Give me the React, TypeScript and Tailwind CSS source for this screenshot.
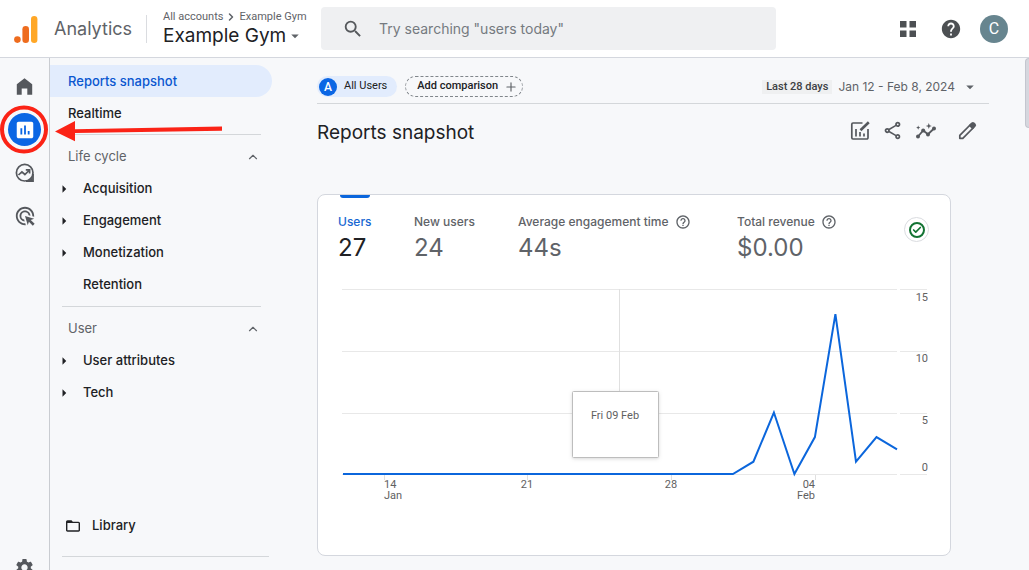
import React from 'react';
import {
  MdAdsClick,
  MdArrowDropDown,
  MdArrowRight,
  MdHelp,
  MdHelpOutline,
  MdInsertChart,
  MdOutlineShare,
  MdSearch,
  MdSettings,
} from 'react-icons/md';
import { Check, ChevronRight, ChevronUp, Plus } from 'lucide-react';

const lifeCycle = [
  { label: 'Acquisition', expandable: true },
  { label: 'Engagement', expandable: true },
  { label: 'Monetization', expandable: true },
  { label: 'Retention', expandable: false },
];

const userItems = [
  { label: 'User attributes', expandable: true },
  { label: 'Tech', expandable: true },
];

const metrics = [
  { label: 'Users', value: '27', active: true, help: false, width: 'w-[76px]' },
  { label: 'New users', value: '24', active: false, help: false, width: 'w-[104px]' },
  { label: 'Average engagement time', value: '44s', active: false, help: true, width: 'w-[219px]' },
  { label: 'Total revenue', value: '$0.00', active: false, help: true, width: 'w-[110px]' },
];

// Users per day, Jan 12 - Feb 8
const dailyUsers = [0, 0, 0, 0, 0, 0, 0, 0, 0, 0, 0, 0, 0, 0, 0, 0, 0, 0, 0, 0, 1, 5, 0, 3, 13, 1, 3, 2];

const CHART_LEFT = 25;
const CHART_RIGHT = 579;
const CHART_BASE = 194;

const points = dailyUsers
  .map((v, i) => {
    const x = CHART_LEFT + (i * (CHART_RIGHT - CHART_LEFT)) / (dailyUsers.length - 1);
    return `${x.toFixed(1)},${(CHART_BASE - v * 12.3).toFixed(1)}`;
  })
  .join(' ');

const gridLines = [
  { y: 9, label: '15', labelY: 21 },
  { y: 71, label: '10', labelY: 82 },
  { y: 133, label: '5', labelY: 144 },
  { y: 194, label: '0', labelY: 191 },
];

const ticks = [
  { x: 66, day: '14', month: 'Jan', anchor: 'start' as const },
  { x: 209, day: '21', month: '', anchor: 'middle' as const },
  { x: 353, day: '28', month: '', anchor: 'middle' as const },
  { x: 497, day: '04', month: 'Feb', anchor: 'end' as const },
];

const LogoIcon = () => (
  <svg viewBox="0 0 24 28" className="w-6 h-7" aria-hidden="true">
    <rect x="17" y="1" width="6.4" height="27" rx="3.2" fill="#ffa726" />
    <rect x="8.4" y="11" width="6.6" height="17" rx="3.3" fill="#ee6c1e" />
    <circle cx="3.4" cy="24.6" r="3.3" fill="#ee6c1e" />
  </svg>
);

const HomeIcon = () => (
  <svg viewBox="0 0 24 24" className="w-[21px] h-[21px]" fill="currentColor" aria-hidden="true">
    <path d="M3.200 21.500V9.400L12 2.600l8.800 6.800v12.100h-5.600v-7.300H8.800v7.300z" />
  </svg>
);

const ExploreIcon = () => (
  <svg viewBox="0 0 20 20" className="w-5 h-5" fill="none" stroke="currentColor" aria-hidden="true">
    <circle cx="9.700" cy="9.700" r="8.300" strokeWidth="1.700" />
    <path d="M11 18h7V11" strokeWidth="1.800" />
    <path d="M17.500 14v3.500H14z" fill="currentColor" stroke="none" />
    <path d="M3.500 12l3.400-3.200 3 2.700L14 7.500M10.800 6.800h3.800v3.800" strokeWidth="1.700" />
  </svg>
);

const ChartEditIcon = () => (
  <svg viewBox="0 0 20 20" className="w-5 h-5" fill="none" stroke="currentColor" aria-hidden="true">
    <path d="M12.500 2H3a1.200 1.200 0 0 0-1.200 1.200v13.600A1.200 1.200 0 0 0 3 18h13.800a1.200 1.200 0 0 0 1.200-1.200V8" strokeWidth="1.700" />
    <path d="M6 8v7.500M10 11v4.500M14 12.500v3" strokeWidth="1.700" />
    <path d="M10.500 9.200L18.800 1.200" strokeWidth="2.600" />
  </svg>
);

const InsightsIcon = () => (
  <svg viewBox="0 0 22 20" className="w-[22px] h-5" fill="currentColor" aria-hidden="true">
    <path d="M3 15.500L8.200 9.500L13 13.200L19 7.500" fill="none" stroke="currentColor" strokeWidth="1.800" />
    <circle cx="3" cy="15.500" r="2" />
    <circle cx="8.200" cy="9.500" r="2" />
    <circle cx="13" cy="13.500" r="2" />
    <circle cx="19" cy="7.500" r="2" />
    <path d="M13.800 2l.8 2.200 2.200.8-2.200.8-.8 2.200-.8-2.200-2.200-.8 2.200-.8zM3.200 4.500l.6 1.500 1.500.6-1.500.6-.6 1.500-.6-1.500-1.500-.6 1.500-.6z" />
  </svg>
);

const PencilIcon = () => (
  <svg viewBox="0 0 20 20" className="w-5 h-5" fill="none" stroke="currentColor" aria-hidden="true">
    <path d="M2.800 17.300v-3L13.600 3.500l3 3L5.800 17.300z" strokeWidth="1.700" strokeLinejoin="round" />
    <path d="M11.600 4.500l2.900-2.900a2 2 0 0 1 2.800 0l1.200 1.200a2 2 0 0 1 0 2.800l-2.900 2.900z" fill="currentColor" stroke="none" />
  </svg>
);

const FolderIcon = () => (
  <svg viewBox="0 0 16 16" className="w-4 h-4" fill="none" stroke="currentColor" aria-hidden="true">
    <path d="M2.500 3h3.700l1.300 1.400h6a.8.8 0 0 1 .8.8v7a.8.8 0 0 1-.8.8h-11a.8.8 0 0 1-.8-.8V3.800A.8.8 0 0 1 2.500 3z" strokeWidth="1.400" />
    <path d="M2 3h4l1.500 2H2z" fill="currentColor" stroke="none" />
  </svg>
);

const Header = () => (
  <header className="flex h-[58px] shrink-0 items-center border-b border-[#d4d7de] bg-white pl-[14px] pr-[21px]">
    <a href="#" className="flex w-[133px] shrink-0 items-center gap-4 border-r border-[#dadce0] text-[18px] text-[#5f6368]">
      <LogoIcon />
      Analytics
    </a>
    <div className="ml-4 w-[158px] shrink-0 whitespace-nowrap">
      <div className="flex items-center text-[11px] leading-[14px] text-[#5f6368] font-['Roboto',sans-serif]">
        <span>All accounts</span>
        <ChevronRight className="mx-0.5 w-3 h-3" strokeWidth={3} />
        <span>Example Gym</span>
      </div>
      <button className="flex items-center text-[19px] leading-6 text-[#202124]">
        Example Gym
        <MdArrowDropDown className="w-[18px] h-[18px] text-[#5f6368]" />
      </button>
    </div>
    <label className="flex h-[43px] max-w-[455px] flex-1 items-center rounded bg-[#eff0f2] pl-[21px]">
      <MdSearch className="w-[22px] h-[22px] text-[#55585c]" />
      <input
        type="text"
        aria-label="Search"
        placeholder={'Try searching "users today"'}
        className="ml-[15px] min-w-0 flex-1 bg-transparent text-[14px] text-[#202124] outline-none placeholder:text-[#757a80]"
      />
    </label>
    <div className="ml-auto flex items-center text-[#4d5053]">
      <button aria-label="Apps" className="mr-6">
        <svg viewBox="0 0 16 16" className="w-4 h-4" fill="currentColor">
          <path d="M0 0h6.500v6.500H0zM9.500 0H16v6.500H9.500zM0 9.500h6.500V16H0zM9.500 9.500H16V16H9.500z" />
        </svg>
      </button>
      <button aria-label="Help" className="mr-[18px]">
        <MdHelp className="w-[22px] h-[22px]" />
      </button>
      <button className="flex w-7 h-7 items-center justify-center rounded-full bg-[#67858f] text-[16px] text-white font-['Roboto',sans-serif]">
        C
      </button>
    </div>
  </header>
);

const Rail = () => (
  <nav aria-label="Main" className="flex w-[50px] shrink-0 flex-col items-center overflow-hidden border-r border-[#c9ccd1] pt-[7px] text-[#55585d]">
    <a href="#" aria-label="Home" className="flex h-[43px] shrink-0 items-center">
      <HomeIcon />
    </a>
    <a href="#" aria-label="Reports" className="flex h-[43px] shrink-0 items-center">
      <span className="flex w-[33px] h-[33px] items-center justify-center rounded-full bg-[#0b66e4] text-white">
        <MdInsertChart className="w-[22px] h-[22px]" />
      </span>
    </a>
    <a href="#" aria-label="Explore" className="flex h-[43px] shrink-0 items-center">
      <ExploreIcon />
    </a>
    <a href="#" aria-label="Advertising" className="flex h-[43px] shrink-0 items-center">
      <MdAdsClick className="w-[22px] h-[22px]" />
    </a>
    <a href="#" aria-label="Admin" className="-mb-2 mt-auto shrink-0">
      <MdSettings className="w-[21px] h-[21px]" />
    </a>
  </nav>
);

const NavGroup = ({ title, items }: { title: string; items: { label: string; expandable: boolean }[] }) => (
  <div className="pt-[5px]">
    <div className="ml-3 mr-[11px] border-t border-[#d4d7da]" />
    <button className="mt-1.5 flex h-8 w-full items-center justify-between pl-[18px] pr-3 font-normal text-[#5f6368]">
      {title}
      <ChevronUp className="w-3.5 h-3.5" />
    </button>
    {items.map((item) => (
      <a key={item.label} href="#" className="flex h-8 items-center pl-[5px]">
        <span className="flex w-7 shrink-0">{item.expandable && <MdArrowRight className="w-[18px] h-[18px]" />}</span>
        {item.label}
      </a>
    ))}
  </div>
);

const Sidebar = () => (
  <nav aria-label="Reports" className="flex w-[222px] shrink-0 flex-col pt-[7px] text-[13px] font-medium text-[#202124]">
    <a href="#" className="flex h-8 items-center rounded-r-full bg-[#e2ecfd] pl-[18px] pt-px text-[#0b57d0]">
      Reports snapshot
    </a>
    <a href="#" className="flex h-8 items-center pl-[18px] pt-px">
      Realtime
    </a>
    <NavGroup title="Life cycle" items={lifeCycle} />
    <NavGroup title="User" items={userItems} />
    <div className="mt-auto pb-[13px]">
      <a href="#" className="flex h-8 items-center gap-[11px] pl-[15px]">
        <FolderIcon />
        Library
      </a>
      <div className="ml-3 mr-[3px] mt-3.5 border-t border-[#d4d7da]" />
    </div>
  </nav>
);

const UsersChart = () => (
  <svg viewBox="0 0 632 234" className="block w-full" role="img" aria-label="Users per day" fontFamily="Roboto, sans-serif" fontSize="11" fill="#616161">
    {gridLines.map((line) => (
      <g key={line.label}>
        <path d={`M24 ${line.y + 0.5}H579M582 ${line.y + 0.5}H609`} stroke="#e8e8e8" />
        <text x="610" y={line.labelY} textAnchor="end">{line.label}</text>
      </g>
    ))}
    {ticks.map((tick) => (
      <g key={tick.day}>
        <path d={`M${tick.x + 0.5} 195v5`} stroke="#e0e0e0" />
        <text x={tick.x} y="208" textAnchor={tick.anchor}>{tick.day}</text>
        <text x={tick.x} y="219" textAnchor={tick.anchor}>{tick.month}</text>
      </g>
    ))}
    <path d="M301.500 9v103" stroke="#e0e0e0" />
    <polyline points={points} fill="none" stroke="#0b66dc" strokeWidth="2" />
    {/* Hover tooltip */}
    <g>
      <rect x="254.500" y="111.500" width="86" height="66" rx="1" fill="#fff" stroke="#bdbdbd" className="drop-shadow" />
      <text x="297" y="139" textAnchor="middle">Fri 09 Feb</text>
    </g>
  </svg>
);

const OverviewCard = () => (
  <section className="mr-[38px] h-[362px] rounded-lg border border-[#d4d7de] bg-white">
    <div className="flex h-[85px] pl-5 pr-[21px]">
      {metrics.map((m) => (
        <button key={m.label} className={`flex shrink-0 flex-col items-start text-left ${m.width}`}>
          <span className={`ml-0.5 h-[3px] w-[30px] rounded-b-sm ${m.active ? 'bg-[#0b66dc]' : ''}`} />
          <span className={`mt-4 flex items-center gap-1.5 whitespace-nowrap text-[12px] font-medium leading-4 ${m.active ? 'text-[#1967d2]' : 'text-[#5f6368]'}`}>
            {m.label}
            {m.help && <MdHelpOutline className="w-4 h-4" />}
          </span>
          <span className={`mt-0.5 text-[24px] leading-8 ${m.active ? 'text-[#202124]' : 'text-[#5f6368]'}`}>{m.value}</span>
        </button>
      ))}
      <button aria-label="Data quality" className="ml-auto mt-[22px] flex w-[25px] h-[25px] items-center justify-center rounded-full border border-[#dadce0] text-[#137333]">
        <span className="flex w-4 h-4 items-center justify-center rounded-full border-2 border-current">
          <Check className="w-2.5 h-2.5" strokeWidth={4} />
        </span>
      </button>
    </div>
    <UsersChart />
  </section>
);

const Report = () => (
  <main className="min-w-0 flex-1 pl-[45px] pr-10">
    <div className="flex items-center whitespace-nowrap border-b border-[#d4d7da] pb-1.5 pt-[18px]">
      <button className="flex h-[21px] items-center gap-[7px] rounded-full bg-[#e2ecfd] pl-0.5 pr-2.5 text-[11px] text-[#202124] font-['Roboto',sans-serif]">
        <span className="flex w-[18px] h-[18px] items-center justify-center rounded-full bg-[#0b66e4] text-[12px] font-medium text-white">A</span>
        All Users
      </button>
      <button className="ml-2 flex h-[21px] items-center gap-1.5 rounded-full border border-dashed border-[#80868b] pl-[11px] pr-1 text-[11px] font-medium text-[#202124] font-['Roboto',sans-serif]">
        Add comparison
        <Plus className="w-3.5 h-3.5 text-[#5f6368]" />
      </button>
      <button className="ml-auto flex h-[21px] items-center pr-2.5 text-[12px] text-[#5f6368]">
        <span className="mr-1.5 bg-[#eff0f1] px-1 text-[11px] leading-3.5 font-medium text-[#3c4043] font-['Roboto',sans-serif]">Last 28 days</span>
        Jan 12 - Feb 8, 2024
        <MdArrowDropDown className="ml-1.5 w-[18px] h-[18px]" />
      </button>
    </div>
    <div className="flex h-[90px] items-start justify-between">
      <h1 className="pt-[15px] text-[19px] leading-7 text-[#202124]">Reports snapshot</h1>
      <div className="flex items-center gap-3 pr-3 pt-4 text-[#55585d]">
        <button aria-label="Customize report"><ChartEditIcon /></button>
        <button aria-label="Share"><MdOutlineShare className="w-[21px] h-[21px]" /></button>
        <button aria-label="Insights"><InsightsIcon /></button>
        <button aria-label="Edit" className="ml-2"><PencilIcon /></button>
      </div>
    </div>
    <OverviewCard />
  </main>
);

// Red ring and arrow pointing at the Reports icon
const Callout = () => (
  <svg viewBox="0 0 230 56" className="pointer-events-none absolute left-0 top-[101px] w-[230px] h-14" aria-hidden="true">
    <circle cx="24" cy="28.500" r="22" fill="none" stroke="#fb2316" strokeWidth="4" />
    <path d="M55 30.500L75 20v8.300L222 25.500v4.300L75 32v8.300z" fill="#fb2316" />
  </svg>
);

const App = () => {
  return (
    <div className="relative flex h-screen flex-col overflow-hidden bg-[#f7f8fa] font-['Inter',sans-serif]">
      <Header />
      <div className="flex min-h-0 flex-1">
        <Rail />
        <Sidebar />
        <Report />
      </div>
      <div className="absolute right-0 top-[58px] h-[70px] w-1 rounded-l-sm border border-r-0 border-[#c4c6cf] bg-[#d6d7de]" />
      <Callout />
    </div>
  );
};

export default App;
